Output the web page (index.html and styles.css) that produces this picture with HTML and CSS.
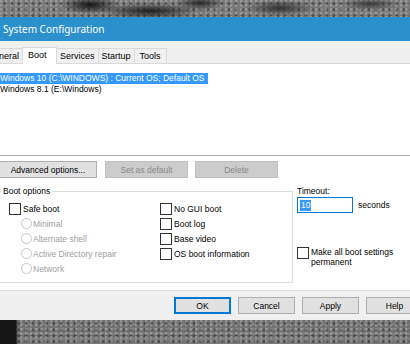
FILE: index.html
```html
<!DOCTYPE html>
<html>
  <head>
    <title>System Configuration</title>
    <meta charset="utf-8"/>
    <link rel="stylesheet" href="styles.css">
  </head>
  <body>
    <div class="granite top"></div>
    <div class="window">
      <div class="titlebar">System Configuration</div>
      <div class="tabstrip">
        <div class="tab first">General</div>
        <div class="tab active">Boot</div>
        <div class="tab">Services</div>
        <div class="tab">Startup</div>
        <div class="tab last">Tools</div>
      </div>
      <div class="page">
        <div class="listbox">
          <div class="entry"><span class="selected">Windows 10 (C:\WINDOWS) : Current OS; Default OS</span></div>
          <div class="entry">Windows 8.1 (E:\Windows)</div>
        </div>
        <div class="btnrow">
          <button class="btn adv">Advanced options...</button>
          <button class="btn" disabled>Set as default</button>
          <button class="btn" disabled>Delete</button>
        </div>
        <div class="options">
          <fieldset class="group">
            <legend>Boot options</legend>
            <div class="cols">
              <div class="col left">
                <div class="item"><span class="box"></span>Safe boot</div>
                <div class="item sub off"><span class="radio"></span>Minimal</div>
                <div class="item sub off"><span class="radio"></span>Alternate shell</div>
                <div class="item sub off"><span class="radio"></span>Active Directory repair</div>
                <div class="item sub off"><span class="radio"></span>Network</div>
              </div>
              <div class="col right">
                <div class="item"><span class="box"></span>No GUI boot</div>
                <div class="item"><span class="box"></span>Boot log</div>
                <div class="item"><span class="box"></span>Base video</div>
                <div class="item"><span class="box"></span>OS boot information</div>
              </div>
            </div>
          </fieldset>
          <div class="side">
            <div class="label">Timeout:</div>
            <div class="timeout">
              <span class="input"><span class="hl">10</span></span>
              <span>seconds</span>
            </div>
            <div class="item perm"><span class="box"></span><span>Make all boot settings<br/>permanent</span></div>
          </div>
        </div>
      </div>
      <div class="footer">
        <button class="btn default">OK</button>
        <button class="btn">Cancel</button>
        <button class="btn">Apply</button>
        <button class="btn">Help</button>
      </div>
    </div>
    <div class="granite bottom"></div>
  </body>
</html>
```

FILE: styles.css
```css
body {
  margin: 0;
  width: 410px;
  height: 344px;
  overflow: hidden;
  background: #5a5a5a;
  font-family: "Liberation Sans", Arial, sans-serif;
  font-size: 8.5px;
  color: #000;
}
div, button, span, fieldset {
  box-sizing: border-box;
}

.granite {
  background-color: #666;
  background-image:
    radial-gradient(circle at 20% 30%, rgba(255,255,255,0.18) 0 1px, transparent 2px),
    radial-gradient(circle at 70% 60%, rgba(0,0,0,0.35) 0 1px, transparent 2px),
    radial-gradient(circle at 40% 80%, rgba(255,255,255,0.12) 0 1px, transparent 2px);
  background-size: 5px 4px, 7px 6px, 3px 5px;
}
.granite.top {
  height: 17px;
  background-color: #7a7a7a;
  background-image:
    radial-gradient(ellipse 30px 9px at 90px 5px, #151515, transparent),
    radial-gradient(ellipse 50px 8px at 150px 11px, #1e1e1e, transparent),
    radial-gradient(ellipse 25px 7px at 200px 3px, #2a2a2a, transparent),
    radial-gradient(ellipse 35px 8px at 280px 8px, #333, transparent),
    radial-gradient(ellipse 30px 6px at 370px 4px, #3a3a3a, transparent),
    radial-gradient(circle at 20% 30%, rgba(255,255,255,0.22) 0 1px, transparent 2px),
    radial-gradient(circle at 70% 60%, rgba(0,0,0,0.35) 0 1px, transparent 2px);
  background-size: auto, auto, auto, auto, auto, 5px 4px, 7px 6px;
}
.granite.bottom {
  height: 24px;
  background-color: #6e6e6e;
  background-image:
    linear-gradient(90deg, #161616 0 16px, transparent 18px),
    radial-gradient(circle at 20% 30%, rgba(255,255,255,0.22) 0 1px, transparent 2px),
    radial-gradient(circle at 70% 60%, rgba(0,0,0,0.35) 0 1px, transparent 2px),
    radial-gradient(circle at 40% 80%, rgba(255,255,255,0.12) 0 1px, transparent 2px);
  background-size: auto, 5px 4px, 7px 6px, 3px 5px;
}

.window {
  background: #f0f0f0;
}
.titlebar {
  height: 24px;
  background: #2b90cb;
  color: #fff;
  font-family: "Noto Sans", sans-serif;
  font-size: 10px;
  line-height: 24px;
  padding-left: 3px;
}

.tabstrip {
  display: flex;
  align-items: flex-end;
  height: 23px;
  border-bottom: 1px solid #d9d9d9;
}
.tab {
  height: 15px;
  padding: 0 3px;
  border: 1px solid #d9d9d9;
  border-bottom: none;
  margin-left: -1px;
  line-height: 14px;
  font-size: 9px;
}
.tab.first {
  margin-left: -20px;
  width: 43px;
  text-align: right;
}
.tab.active {
  height: 17px;
  background: #fff;
  width: 35px;
  padding-left: 5px;
  margin-bottom: -1px;
  line-height: 15px;
}
.tab.last {
  padding: 0 5px;
}

.page {
  background: #fff;
  height: 227px;
  border-bottom: 1px solid #dfdfdf;
  overflow: hidden;
}
.listbox {
  height: 92px;
  padding-top: 9px;
  border-bottom: 1px solid #a8a8a8;
}
.entry {
  height: 11px;
  line-height: 11px;
  font-size: 8.5px;
  white-space: nowrap;
}
.selected {
  display: inline-block;
  padding-right: 3px;
  background: #3399ff;
  color: #fff;
}

.btn {
  font-family: "Liberation Sans", Arial, sans-serif;
  font-size: 8.5px;
  color: #000;
  background: #e1e1e1;
  border: 1px solid #adadad;
  padding: 0;
  height: 17px;
}
.btn:disabled {
  background: #cccccc;
  border-color: #bfbfbf;
  color: #8a8a8a;
}
.btnrow {
  display: flex;
  gap: 7px;
  margin-top: 5px;
}
.btnrow .btn {
  width: 83px;
}
.btnrow .btn.adv {
  width: 98px;
  margin-left: -1px;
  margin-right: 1px;
}

.options {
  display: flex;
  margin-top: 7px;
}
.group {
  margin: 0 0 0 -6px;
  width: 299px;
  height: 98px;
  padding: 4px 0 0 14px;
  border: 1px solid #dcdcdc;
  min-width: 0;
  flex: none;
}
.group legend {
  padding: 0 2px;
  margin-left: -8px;
  line-height: 12px;
  height: 12px;
}
.cols {
  display: flex;
}
.col.left {
  width: 151px;
}
.item {
  display: flex;
  align-items: center;
  height: 15px;
  white-space: nowrap;
}
.item.sub {
  padding-left: 12px;
}
.item.off {
  color: #a0a0a0;
}
.box {
  width: 12px;
  height: 12px;
  border: 1px solid #333;
  background: #fff;
  margin-right: 2px;
  flex: none;
}
.radio {
  width: 11px;
  height: 11px;
  border: 1px solid #c6c6c6;
  border-radius: 50%;
  margin-right: 1px;
  flex: none;
}

.side {
  padding: 0 0 0 4px;
}
.label {
  height: 12px;
  line-height: 12px;
}
.timeout {
  display: flex;
  align-items: center;
  gap: 5px;
}
.input {
  display: block;
  width: 56px;
  height: 16px;
  border: 1px solid #0078d7;
  padding: 2px 0 0 2px;
}
.hl {
  display: inline-block;
  background: #3399ff;
  color: #fff;
  padding: 0 1px;
  line-height: 11px;
}
.item.perm {
  align-items: flex-start;
  height: auto;
  margin-top: 34px;
  line-height: 10px;
  white-space: normal;
}

.footer {
  display: flex;
  gap: 7px;
  height: 29px;
  padding: 6px 0 0 174px;
}
.footer .btn {
  width: 57px;
  flex: none;
}
.footer .btn.default {
  border: 2px solid #0078d7;
}
```
